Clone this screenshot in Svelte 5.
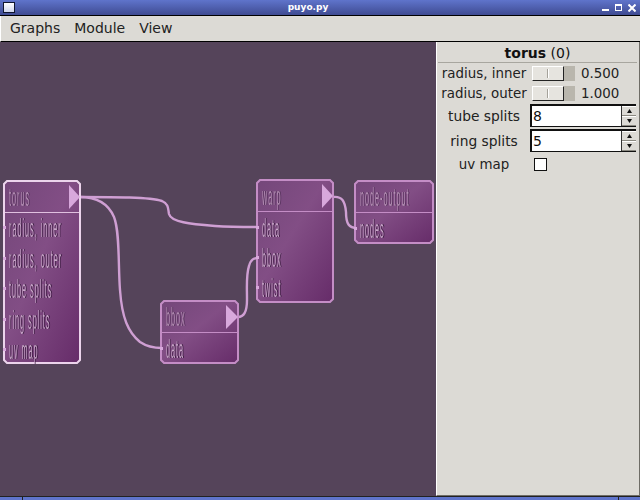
<script>
  const nodes = [
    { title: 'torus', x: 4, y: 181, w: 76, h: 182, div: 31, sel: true, tri: 69, ports: [['radius, inner', 46], ['radius, outer', 77], ['tube splits', 107], ['ring splits', 138], ['uv map', 168]] },
    { title: 'bbox', x: 161, y: 301, w: 77, h: 62, div: 31, tri: 226, ports: [['data', 47]] },
    { title: 'warp', x: 257, y: 180, w: 76, h: 122, div: 31, tri: 322, ports: [['data', 47], ['bbox', 77], ['twist', 107]] },
    { title: 'node-output', x: 355, y: 181, w: 78, h: 62, div: 31, ports: [['nodes', 47]] }
  ];
  const shape = (n) => {
    const c = 3, r = n.x + n.w, b = n.y + n.h;
    return `${n.x + c},${n.y} ${r - c},${n.y} ${r},${n.y + c} ${r},${b - c} ${r - c},${b} ${n.x + c},${b} ${n.x},${b - c} ${n.x},${n.y + c}`;
  };
  const wires = [
    'M80 197 C115 197 150 197 162 201 C169 204 168 209 169 214 C171 222 190 224 215 226 C230 227 245 227 258 227',
    'M80 197 C96 197 108 203 114 217 C120 232 118 265 120 290 C122 318 128 332 140 342 C146 346 154 348 162 348',
    'M238 317 C244 317 247 311 247 300 C247 285 246 275 249 266 C251 259 254 258 258 258',
    'M333 197 C342 196 345 201 346 212 C346 224 349 228 357 228'
  ];
  const radiusRows = [['radius, inner', '0.500'], ['radius, outer', '1.000']];
  const spinRows = [['tube splits', '8'], ['ring splits', '5']];
</script>

<div class="win">
  <header class="title">
    <span class="winicon"></span>
    <span class="name">puyo.py</span>
    <span class="controls">
      <span class="min"></span>
      <span class="max"></span>
      <svg width="8" height="8" viewBox="0 0 8 8"><path d="M0.5 0.5 7.5 7.5M7.5 0.5 0.5 7.5" stroke="#fff" stroke-width="2" fill="none" /></svg>
    </span>
  </header>
  <nav class="menu">
    <span>Graphs</span><span>Module</span><span>View</span>
  </nav>
  <main class="body">
    <svg class="canvas" width="436" height="454" viewBox="0 42 436 454">
      <defs>
        <linearGradient id="nodefill" x1="0" y1="0" x2="1" y2="1">
          <stop offset="0" stop-color="#74477a" />
          <stop offset="0.45" stop-color="#824e85" />
          <stop offset="1" stop-color="#662c69" />
        </linearGradient>
      </defs>
      {#each wires as d}
        <path {d} class="wire" />
      {/each}
      {#each nodes as n}
        <g>
          <polygon points={shape(n)} fill="url(#nodefill)" class={n.sel ? 'edge sel' : 'edge'} />
          <line x1={n.x + 1} x2={n.x + n.w - 1} y1={n.y + n.div + 0.5} y2={n.y + n.div + 0.5} class={n.sel ? 'rule sel' : 'rule'} />
          {#if n.tri}
            <polygon points={`${n.tri},${n.y + 4} ${n.x + n.w},${n.y + 16} ${n.tri},${n.y + 28}`} class="tri" />
          {/if}
          <text class="label head" transform={`translate(${n.x + 5} ${n.y + 25}) scale(0.72 2.5)`}>{n.title}</text>
          {#each n.ports as p}
            <rect x={n.x - 1} y={n.y + p[1] - 1} width="3" height="3" class="tri" />
            <text class="label" transform={`translate(${n.x + 5} ${n.y + p[1] + 10}) scale(0.72 2.5)`}>{p[0]}</text>
          {/each}
        </g>
      {/each}
    </svg>
    <aside class="panel">
      <h1><b>torus</b> (0)</h1>
      {#each radiusRows as r}
        <div class="row scale">
          <span class="lab">{r[0]}</span>
          <span class="trough"><span class="thumb"><i></i></span></span>
          <span class="val">{r[1]}</span>
        </div>
      {/each}
      <div class="spins">
        {#each spinRows as s}
          <div class="row spin">
            <span class="lab">{s[0]}</span>
            <span class="entry">
              <span class="num">{s[1]}</span>
              <span class="arrows">
                <span><svg width="5" height="4" viewBox="0 0 5 4"><path d="M2.5 0 5 4H0z" /></svg></span>
                <span><svg width="5" height="4" viewBox="0 0 5 4"><path d="M0 0H5L2.5 4z" /></svg></span>
              </span>
            </span>
          </div>
        {/each}
      </div>
      <div class="row check">
        <span class="lab">uv map</span>
        <span class="box"></span>
      </div>
    </aside>
  </main>
  <footer class="strip"><i></i><i></i></footer>
</div>

<style>
  :global(body) { margin: 0; background: #55445a; }
  .win {
    width: 640px;
    height: 500px;
    display: flex;
    flex-direction: column;
    overflow: hidden;
    font-family: "DejaVu Sans", sans-serif;
    color: #1a1a1a;
  }
  .title {
    height: 15px;
    flex: none;
    border-bottom: 1px solid #000;
    background: linear-gradient(#5f74cb, #3f4b92);
    display: flex;
    align-items: center;
    justify-content: space-between;
    padding: 0 4px 0 3px;
    position: relative;
  }
  .winicon {
    width: 10px;
    height: 9px;
    background: linear-gradient(#fff, #cfd6ee);
    border: 1px solid #10162f;
  }
  .name {
    position: absolute;
    left: 0;
    right: 24px;
    top: 1px;
    text-align: center;
    color: #fff;
    font-size: 9px;
    line-height: 12px;
    font-weight: bold;
  }
  .controls { display: flex; align-items: center; gap: 6px; }
  .min { width: 7px; height: 2px; background: #fff; margin-top: 5px; }
  .max { width: 5px; height: 4px; border: 1px solid #fff; border-top-width: 2px; }
  .menu {
    height: 26px;
    flex: none;
    box-sizing: border-box;
    background: #dcdad5;
    border-left: 1px solid #fff;
    border-bottom: 1px solid #000;
    display: flex;
    align-items: center;
    gap: 14px;
    padding: 0 0 1px 9px;
    font-size: 14px;
    color: #222;
  }
  .body { flex: 1; display: flex; min-height: 0; }
  .canvas { display: block; flex: none; background: #55445a; }
  .wire { fill: none; stroke: #cf9fd3; stroke-width: 2.4; }
  .edge { stroke: #c48dc6; stroke-width: 2; }
  .edge.sel { stroke: #ecd4ec; }
  .rule { stroke: #c48dc6; stroke-width: 1; }
  .rule.sel { stroke: #e0c0e0; }
  .tri { fill: #d8a8dc; }
  .label {
    font-family: "Liberation Sans", sans-serif;
    font-size: 10px;
    font-weight: 400;
    letter-spacing: 1.4px;
    fill: #c8a4c8;
    filter: drop-shadow(1px 0 0 #2a1030);
  }
  .label.head { fill: #b48eb4; filter: drop-shadow(1px 0 0 #4a2a50); }
  .panel {
    width: 204px;
    height: 454px;
    box-sizing: border-box;
    background: #dcdad5;
    border-left: 1px solid #fff;
    border-right: 1px solid #6e6c66;
    border-bottom: 1px solid #6e6c66;
    padding: 0 2px 0 1px;
    font-size: 13.4px;
  }
  h1 {
    margin: 0;
    height: 21px;
    line-height: 22px;
    font-size: 14px;
    font-weight: 400;
    text-align: center;
    border-bottom: 1px solid #a8a69f;
    box-sizing: border-box;
    color: #111;
  }
  .row { display: flex; align-items: center; }
  .lab { width: 92px; flex: none; text-align: center; white-space: nowrap; color: #222; }
  .scale { height: 20px; }
  .trough {
    width: 43px;
    height: 15px;
    margin-left: 2px;
    box-sizing: border-box;
    background: #b9b6ad;
    flex: none;
  }
  .thumb {
    display: flex;
    justify-content: center;
    align-items: center;
    width: 32px;
    height: 15px;
    box-sizing: border-box;
    background: #e6e4df;
    border: 1px solid #fff;
    border-right-color: #222;
    border-bottom-color: #222;
  }
  .thumb i { width: 1px; height: 9px; background: #a5a29a; display: block; border-right: 1px solid #fff; }
  .val { margin-left: 6px; color: #222; }
  .spins { margin-top: 1px; display: flex; flex-direction: column; gap: 2px; }
  .spin { height: 23px; font-size: 13.8px; }
  .entry {
    flex: none;
    margin-left: 0;
    width: 106px;
    height: 23px;
    box-sizing: border-box;
    background: #fff;
    border: 1px solid #111;
    border-left-width: 2px;
    border-top-width: 2px;
    border-right: none;
    display: flex;
    justify-content: space-between;
  }
  .num { padding-left: 1px; line-height: 20px; color: #111; font-size: 14px; }
  .arrows { width: 14px; display: flex; flex-direction: column; background: #dcdad5; border-left: 1px solid #333; }
  .arrows span {
    flex: 1;
    display: flex;
    align-items: center;
    justify-content: center;
    border-top: 1px solid #fff;
    border-bottom: 1px solid #8a8880;
  }
  .arrows svg path { fill: #111; }
  .check { height: 18px; margin-top: 3px; }
  .box {
    width: 13px;
    height: 13px;
    box-sizing: border-box;
    background: #fff;
    border: 1px solid #111;
    margin-left: 4px;
  }
  .strip {
    height: 4px;
    flex: none;
    border-top: 1px solid #222;
    box-sizing: border-box;
    background: #5f74cb;
    position: relative;
  }
  .strip i { position: absolute; top: 0; bottom: 0; width: 1px; background: #222; left: 22px; }
  .strip i + i { left: 618px; }
</style>
